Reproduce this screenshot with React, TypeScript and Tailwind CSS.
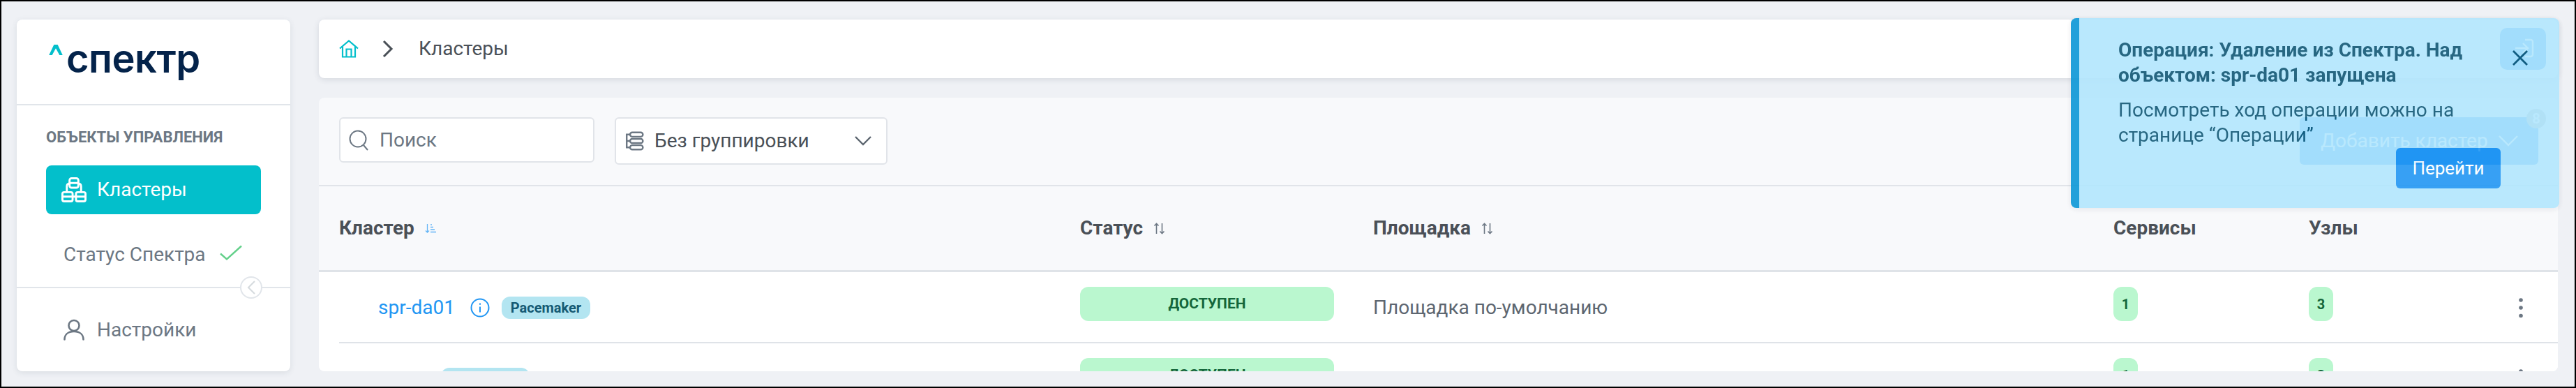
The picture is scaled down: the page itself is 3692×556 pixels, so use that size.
import React from "react";

const font = "font-['Roboto',sans-serif]";

function ClusterIcon() {
  return (
    <svg width="36" height="36" viewBox="0 0 37 37" fill="none" stroke="white" strokeWidth="3" strokeLinejoin="round" strokeLinecap="round" className="shrink-0">
      <rect x="12" y="1.5" width="13" height="14" rx="3" />
      <path d="M12 8.5h13" />
      <path d="M12 9.5c-3 0-4 1-4 4v8M25 9.5c3 0 4 1 4 4v8" />
      <rect x="1.5" y="22" width="15" height="13.5" rx="2.5" />
      <rect x="21.5" y="22" width="14" height="13.5" rx="2.5" />
      <path d="M1.5 28.500h15M21.5 28.500h14M16.5 28.500h5" />
    </svg>
  );
}

function SortBoth() {
  return (
    <svg width="17" height="17" viewBox="0 0 17 17" fill="none" stroke="#6c7783" strokeWidth="1.6" className="shrink-0">
      <path d="M4.5 16V1.500M1.500 4.500l3-3 3 3M12.500 1v14.500M9.500 12.500l3 3 3-3" />
    </svg>
  );
}

function Tag({ children }: { children: React.ReactNode }) {
  return (
    <span className="inline-flex h-[32px] w-[127px] items-center justify-center rounded-[12px] bg-[#b3e5f1] text-[20px] font-bold text-[#155a74]">
      {children}
    </span>
  );
}

function Count({ n }: { n: string }) {
  return (
    <span className="flex h-[49px] w-[35px] items-center justify-center rounded-[12px] bg-[#baf7cf] text-[20px] font-bold text-[#14663a]">
      {n}
    </span>
  );
}

function Kebab() {
  return (
    <svg width="8" height="28" viewBox="0 0 8 28" fill="#6c7783" className="shrink-0">
      <circle cx="4" cy="3" r="2.800" />
      <circle cx="4" cy="14" r="2.800" />
      <circle cx="4" cy="25.500" r="2.800" />
    </svg>
  );
}

function Row({ name, info, border, nodes }: { name: React.ReactNode; info: boolean; border: boolean; nodes: string }) {
  return (
    <div className={`flex h-[102px] shrink-0 items-start bg-white pt-[21px] text-[28px] text-[#5d6670] ${border ? "border-b-2 border-[#dfe3e8]" : ""}`}>
      <div className="flex h-[49px] w-[1062px] shrink-0 items-center pl-[56px] pt-[10px]">
        {name}
        {info && (
          <>
            <svg width="28" height="28" viewBox="0 0 28 28" fill="none" stroke="#2196f3" strokeWidth="2" className="ml-[22px] shrink-0">
              <circle cx="14" cy="14" r="12.5" />
              <path d="M14 12.5v8M14 7.5v2.2" />
            </svg>
            <span className="ml-[17px] flex"><Tag>Pacemaker</Tag></span>
          </>
        )}
      </div>
      <div className="w-[420px] shrink-0 pr-[56px]">
        <div className="flex h-[49px] items-center justify-center rounded-[12px] bg-[#baf7cf] text-[21px] font-bold text-[#14663a]">ДОСТУПЕН</div>
      </div>
      <div className="flex h-[49px] w-[1061px] shrink-0 items-center pt-[10px]">Площадка по-умолчанию</div>
      <div className="w-[280px] shrink-0"><Count n="1" /></div>
      <div className="w-[300px] shrink-0"><Count n={nodes} /></div>
      <div className="flex h-[49px] shrink-0 items-center pt-[10px]"><Kebab /></div>
    </div>
  );
}

function HeaderCell({ label, width, sort }: { label: string; width: string; sort?: React.ReactNode }) {
  return (
    <div className={`flex items-center gap-[15px] ${width} shrink-0`}>
      <span>{label}</span>
      {sort}
    </div>
  );
}

export default function App() {
  return (
    <div className={`${font} relative h-[556px] w-[3692px] overflow-hidden bg-black p-[2px]`}>
      <div className="flex h-[552px] w-[3688px] items-start gap-[41px] overflow-hidden bg-[#eff1f5] pl-[22px] pt-[26px]">
        {/* Sidebar */}
        <aside className="relative flex h-[504px] w-[392px] shrink-0 flex-col rounded-[8px] bg-white shadow-[0_2px_8px_rgba(60,70,90,0.12)]">
          <div className="flex h-[123px] shrink-0 items-center border-b-2 border-[#e1e5ea] pb-[10px] pl-[46px]">
            <svg width="20" height="16" viewBox="0 0 22 18" className="mb-[24px] mr-[5px] shrink-0">
              <polygon points="8,0 14,0 22,17 17,17 11,6 5,17 0,17" fill="#03bfcb" />
            </svg>
            <span className="font-['Inter',sans-serif] text-[56px] font-semibold leading-none tracking-[-0.5px] text-[#04234a]">спектр</span>
          </div>
          <div className="flex h-[262px] shrink-0 flex-col border-b-2 border-[#e1e5ea] px-[42px]">
            <div className="mt-[35px] text-[22px] font-bold uppercase leading-[22px] text-[#6c7783]">Объекты управления</div>
            <div className="mt-[29px] flex h-[70px] items-center gap-[15px] rounded-[8px] bg-[#03bfcb] pl-[22px] text-[28px] text-white">
              <ClusterIcon />
              <span>Кластеры</span>
            </div>
            <div className="mt-[43px] flex items-center pl-[25px] text-[28px] leading-[30px] text-[#6c7783]">
              <span>Статус Спектра</span>
              <svg width="32" height="23" viewBox="0 0 32 22" fill="none" stroke="#63d08a" strokeWidth="2.4" className="mb-[6px] ml-[20px] shrink-0">
                <path d="M1 12l9 8L31 1" />
              </svg>
            </div>
          </div>
          <div className="flex flex-1 items-center gap-[18px] pl-[67px] text-[28px] text-[#6c7783]">
            <svg width="30" height="31" viewBox="0 0 30 31" fill="none" stroke="#6c7783" strokeWidth="2.6" strokeLinecap="round" className="shrink-0">
              <circle cx="15" cy="9.5" r="7.5" />
              <path d="M1.500 29.500c0-7 5-11.500 13.500-11.500s13.500 4.500 13.500 11.500" />
            </svg>
            <span>Настройки</span>
          </div>
          <div className="absolute left-[320px] top-[368px] flex h-[32px] w-[32px] items-center justify-center rounded-full border-[2.5px] border-[#e1e5ea] bg-white">
            <svg width="12" height="20" viewBox="0 0 12 20" fill="none" stroke="#d5dade" strokeWidth="2">
              <path d="M11 1L2 10l9 9" />
            </svg>
          </div>
        </aside>

        {/* Main */}
        <main className="flex h-[504px] w-[3209px] shrink-0 flex-col gap-[28px]">
          <div className="flex h-[84px] shrink-0 items-center rounded-[8px] bg-white pl-[28px] pr-[17px] text-[28px] text-[#4a5057] shadow-[0_2px_8px_rgba(60,70,90,0.14)]">
            <svg width="30" height="26" viewBox="0 0 30 26" fill="none" stroke="#03bfcb" strokeWidth="2.2" className="shrink-0">
              <path d="M2 12.500L15 1.500l13 11" />
              <path d="M6 9.500V24.500H24V9.500" />
              <path d="M11.500 24.500V13.500h7V24.500" />
            </svg>
            <svg width="16" height="26" viewBox="0 0 16 26" fill="none" stroke="#4a5057" strokeWidth="3" className="ml-[33px] shrink-0">
              <path d="M2 2l11 11L2 24" />
            </svg>
            <span className="ml-[36px]">Кластеры</span>
            <div className="ml-auto flex h-[60px] w-[66px] items-center justify-center rounded-[10px] bg-[#2196f3]">
              <svg width="28" height="28" viewBox="0 0 28 28" fill="none" stroke="white" strokeWidth="2.4" className="-mt-[2px] ml-[4px]">
                <path d="M15 2h8a3 3 0 0 1 3 3v18a3 3 0 0 1-3 3h-8M1 14h18M12 7l7 7-7 7" />
              </svg>
            </div>
          </div>

          <div className="flex min-h-0 flex-1 flex-col overflow-hidden rounded-[8px] bg-[#f8f9fb]">
            <div className="flex h-[127px] shrink-0 items-start border-b-2 border-[#e1e4e9] pl-[29px] pt-[28px]">
              <div className="flex h-[65px] w-[366px] items-center rounded-[6px] border-2 border-[#e1e4e9] bg-white pl-[11px] text-[28px] text-[#6c7783]">
                <svg width="30" height="30" viewBox="0 0 30 30" fill="none" stroke="#6c7783" strokeWidth="2" className="shrink-0">
                  <circle cx="14" cy="13" r="11.500" />
                  <path d="M22 22l6 7" />
                </svg>
                <span className="ml-[15px]">Поиск</span>
              </div>
              <div className="ml-[29px] flex h-[68px] w-[391px] items-center rounded-[6px] border-2 border-[#e1e4e9] bg-white pl-[13px] pr-[21px] text-[28px] text-[#4a5057]">
                <svg width="28" height="28" viewBox="0 0 30 32" fill="none" stroke="#6c7783" strokeWidth="2.800" className="shrink-0">
                  <rect x="7" y="2" width="21" height="7" rx="3.500" />
                  <rect x="7" y="12.500" width="21" height="7" rx="3.500" />
                  <rect x="7" y="23" width="21" height="7" rx="3.500" />
                  <path d="M7 5.500H1.500V26.500H7M1.500 16H7" />
                </svg>
                <span className="ml-[14px]">Без группировки</span>
                <svg width="24" height="14" viewBox="0 0 24 14" fill="none" stroke="#5d6670" strokeWidth="2.400" className="ml-auto shrink-0">
                  <path d="M1 1l11 11L23 1" />
                </svg>
              </div>
              <div className="relative ml-[2024px] flex h-[68px] w-[342px] items-center rounded-[6px] bg-[#2196f3] pl-[30px] text-[28px] text-white">
                <span>Добавить кластер</span>
                <svg width="28" height="16" viewBox="0 0 28 16" fill="none" stroke="white" strokeWidth="2.400" className="ml-[15px] shrink-0">
                  <path d="M1 1l13 13L27 1" />
                </svg>
                <span className="absolute -right-[11px] -top-[12px] flex h-[28px] w-[28px] items-center justify-center rounded-full bg-[#adb5bd] text-[20px] font-bold text-white">8</span>
              </div>
            </div>

            <div className="flex h-[123px] shrink-0 items-center border-b-[3px] border-[#dfe3e8] pl-[29px] text-[28px] font-bold text-[#4a5057]">
              <HeaderCell
                label="Кластер"
                width="w-[1062px]"
                sort={
                  <svg width="16" height="14" viewBox="0 0 16 14" fill="none" stroke="#64b5f6" strokeWidth="1.300" className="shrink-0">
                    <path d="M3.500 1v12M1 10.500l2.500 2.500L6 10.500M8 2h2M8 5.500h4M8 9h6M8 12.500h8" />
                  </svg>
                }
              />
              <HeaderCell label="Статус" width="w-[420px]" sort={<SortBoth />} />
              <HeaderCell label="Площадка" width="w-[1061px]" sort={<SortBoth />} />
              <HeaderCell label="Сервисы" width="w-[280px]" />
              <HeaderCell label="Узлы" width="w-[100px]" />
            </div>

            <div className="bg-white pl-[29px]">
              <Row name={<span className="text-[#2196f3]">spr-da01</span>} info border nodes="3" />
              <Row name={<span className="ml-[90px] flex"><Tag>Pacemaker</Tag></span>} info={false} border={false} nodes="3" />
            </div>
          </div>
        </main>
      </div>

      {/* Toast */}
      <div className="absolute left-[2968px] top-[26px] flex h-[272px] w-[700px] overflow-hidden rounded-[8px] bg-[#b1e6fd] opacity-90 shadow-[0_2px_8px_rgba(60,70,90,0.1)]">
        <div className="w-[12px] shrink-0 bg-[#0a96d6]" />
        <div className="relative flex-1 pl-[56px] pr-[120px] pt-[28px] text-[28px] leading-[36px] text-[#0f5674]">
          <div className="font-bold">Операция: Удаление из Спектра. Над объектом: spr-da01 запущена</div>
          <div className="mt-[14px]">Посмотреть ход операции можно на странице “Операции”</div>
          <svg width="24" height="24" viewBox="0 0 24 24" fill="none" stroke="#0f5674" strokeWidth="2.800" className="absolute left-[620px] top-[45px]">
            <path d="M2 2l20 20M22 2L2 22" />
          </svg>
          <div className="absolute left-[454px] top-[186px] flex h-[58px] w-[150px] items-center justify-center rounded-[6px] bg-[#2196f3] text-[26px] text-white">Перейти</div>
        </div>
      </div>
    </div>
  );
}
